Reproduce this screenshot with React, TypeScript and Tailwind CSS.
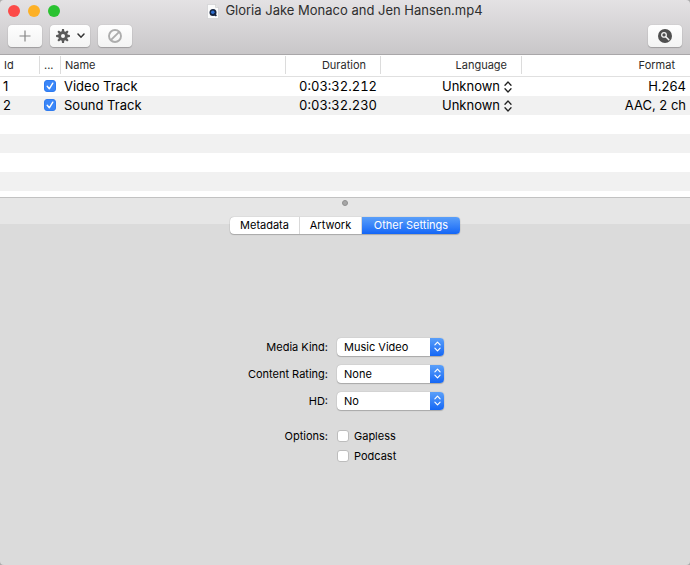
import { useState } from "react";

type Track = {
  id: number;
  name: string;
  duration: string;
  format: string;
};

const tracks: Track[] = [
  { id: 1, name: "Video Track", duration: "0:03:32.212", format: "H.264" },
  { id: 2, name: "Sound Track", duration: "0:03:32.230", format: "AAC, 2 ch" },
];

const tabs = [
  { label: "Metadata", width: "w-[70px]" },
  { label: "Artwork", width: "w-[62px]" },
  { label: "Other Settings", width: "w-[98px]" },
];

const settings = [
  { id: "media-kind", label: "Media Kind:", options: ["Music Video", "Movie", "TV Show"] },
  { id: "content-rating", label: "Content Rating:", options: ["None", "Clean", "Explicit"] },
  { id: "hd", label: "HD:", options: ["No", "720p", "1080p"] },
];

const toolButton =
  "flex h-[22px] items-center justify-center rounded-[4px] bg-linear-to-b from-[#fefefe] to-[#f3f3f3] shadow-[0_0_1px_rgba(0,0,0,0.3),0_1px_1px_rgba(0,0,0,0.2)]";

function UpDown({ className }: { className: string }) {
  return (
    <svg viewBox="0 0 8 12" fill="none" stroke="currentColor" strokeWidth="1.3" strokeLinecap="round" strokeLinejoin="round" className={className}>
      <path d="M1 4.2 4 1l3 3.2M1 7.8 4 11l3-3.2" />
    </svg>
  );
}

function GearIcon() {
  const teeth = [0, 45, 90, 135, 180, 225, 270, 315];
  return (
    <svg viewBox="0 0 14 14" className="size-[14px] text-[#5a5a5a]">
      {teeth.map((angle) => (
        <path key={angle} d="M6 .1h2l.4 3H5.6z" fill="currentColor" transform={`rotate(${angle} 7 7)`} />
      ))}
      <circle cx="7" cy="7" r="3.4" fill="none" stroke="currentColor" strokeWidth="2.8" />
    </svg>
  );
}

function FileIcon() {
  return (
    <svg viewBox="0 0 12 15" className="h-[15px] w-3">
      <path d="M.5.5h8l3 3v11H.5z" fill="#fbfbfb" stroke="#c9c9cc" strokeWidth=".6" />
      <path d="M8.5.5v3h3" fill="#e6e6e6" stroke="#c4c4c4" strokeWidth=".5" />
      <circle cx="6" cy="8.6" r="3.5" fill="#14233f" />
      <circle cx="5.8" cy="8.2" r="1.8" fill="#2f6fd0" />
      <path d="m7 9.8 2.4 2" stroke="#14233f" strokeWidth="1.6" />
    </svg>
  );
}

function HeaderCell({ label, className }: { label: string; className: string }) {
  return (
    <th scope="col" className="p-0 font-normal">
      <div className={`flex h-[18px] items-center ${className}`}>{label}</div>
    </th>
  );
}

function Toolbar() {
  return (
    <header className="border-b border-[#a9a7a9] bg-linear-to-b from-[#e4e2e4] to-[#c9c7c9]">
      <div className="grid h-[22px] grid-cols-[1fr_auto_1fr] items-center px-2">
        <div className="flex gap-2">
          <button aria-label="Close" className="size-3 rounded-full bg-[#fc4a48]" />
          <button aria-label="Minimize" className="size-3 rounded-full bg-[#fdb025]" />
          <button aria-label="Zoom" className="size-3 rounded-full bg-[#2ac231]" />
        </div>
        <h1 className="flex items-center gap-1.5 text-[13px] text-[#2e2e2e]">
          <FileIcon />
          Gloria Jake Monaco and Jen Hansen.mp4
        </h1>
      </div>
      <div className="flex gap-2 px-2 pt-[3px] pb-[7px]">
        <button aria-label="Add" className={`${toolButton} w-[34px]`}>
          <svg viewBox="0 0 12 12" className="size-3">
            <path d="M6 .5v11M.5 6h11" stroke="#858585" strokeWidth="1.2" />
          </svg>
        </button>
        <button aria-label="Actions" className={`${toolButton} w-10 gap-[7px]`}>
          <GearIcon />
          <svg viewBox="0 0 8 6" className="h-1.5 w-2">
            <path d="m1 1 3 3.2L7 1" fill="none" stroke="#333" strokeWidth="1.5" strokeLinecap="round" />
          </svg>
        </button>
        <button aria-label="Remove" className={`${toolButton} w-[34px]`}>
          <svg viewBox="0 0 14 14" className="size-[14px]">
            <path d="M2.8 11.2 11.2 2.8" stroke="#adadad" strokeWidth="1.9" />
            <circle cx="7" cy="7" r="6" fill="none" stroke="#adadad" strokeWidth="1.9" />
          </svg>
        </button>
        <button aria-label="Search" className={`${toolButton} ml-auto w-[34px]`}>
          <svg viewBox="0 0 14 14" className="size-[14px]">
            <circle cx="7" cy="7" r="7" fill="#4f4f4f" />
            <circle cx="6" cy="5.9" r="2.3" fill="none" stroke="#f5f5f5" strokeWidth="1.3" />
            <path d="m7.8 7.7 3 3" stroke="#f5f5f5" strokeWidth="1.5" strokeLinecap="round" />
          </svg>
        </button>
      </div>
    </header>
  );
}

function TrackTable() {
  return (
    <section className="border-b border-[#c2c2c2] bg-white">
      <table className="w-full table-fixed border-collapse text-[13px] text-black">
        <colgroup>
          <col className="w-10" />
          <col className="w-[21px]" />
          <col />
          <col className="w-[95px]" />
          <col className="w-[141px]" />
          <col className="w-[168px]" />
        </colgroup>
        <thead className="text-[11px] text-[#2b2b2b]">
          <tr className="h-[21px] border-b border-[#e0e0e0] text-left">
            <HeaderCell label="Id" className="border-r border-[#dcdcdc] pl-1" />
            <HeaderCell label="..." className="border-r border-[#dcdcdc] pl-1" />
            <HeaderCell label="Name" className="border-r border-[#dcdcdc] pl-1" />
            <HeaderCell label="Duration" className="justify-end border-r border-[#dcdcdc] pr-3.5" />
            <HeaderCell label="Language" className="justify-end border-r border-[#dcdcdc] pr-3.5" />
            <HeaderCell label="Format" className="justify-end pr-[15px]" />
          </tr>
        </thead>
        <tbody>
          {tracks.map((t) => (
            <tr key={t.id} className="h-[19px] leading-[19px] even:bg-[#f1f1f1]">
              <td className="p-0 pl-[3px]">{t.id}</td>
              <td className="p-0 pl-1">
                <div className="relative size-3">
                  <input
                    type="checkbox"
                    defaultChecked
                    aria-label={`Include ${t.name}`}
                    className="peer block size-3 appearance-none rounded-[3px] border border-[#b9b9b9] bg-white checked:border-[#2f7bf0] checked:bg-[#3a86f8]"
                  />
                  <svg viewBox="0 0 12 12" className="pointer-events-none absolute inset-0 hidden size-3 peer-checked:block">
                    <path d="m3.2 6.2 2.1 2.6 3.5-5.6" fill="none" stroke="#fff" strokeWidth="1.4" strokeLinecap="round" strokeLinejoin="round" />
                  </svg>
                </div>
              </td>
              <td className="p-0 pl-[3px]">{t.name}</td>
              <td className="p-0 pr-1 text-right tabular-nums">{t.duration}</td>
              <td className="p-0 pr-2.5">
                <div className="relative ml-auto w-[70px]">
                  <select aria-label={`Language of ${t.name}`} className="block h-[19px] w-full appearance-none bg-transparent leading-[19px]">
                    <option>Unknown</option>
                    <option>English</option>
                  </select>
                  <UpDown className="pointer-events-none absolute top-1 right-0 h-3 w-2 text-[#222]" />
                </div>
              </td>
              <td className="p-0 pr-1 text-right">{t.format}</td>
            </tr>
          ))}
        </tbody>
      </table>
      {/* Empty striped rows below the tracks */}
      <div className="h-[82px] bg-[repeating-linear-gradient(#fff_0_19px,#f1f1f1_19px_38px)]" />
    </section>
  );
}

function SettingsForm() {
  return (
    <form className="grid grid-cols-[82px_107px] items-center gap-x-[9px] text-[11px] leading-[18px] text-black">
      {settings.map((s) => (
        <div key={s.id} className="col-span-2 mb-[9px] grid grid-cols-subgrid">
          <label htmlFor={s.id} className="text-right whitespace-nowrap">
            {s.label}
          </label>
          <div className="relative">
            <select
              id={s.id}
              className="block h-[18px] w-full appearance-none rounded-[4px] bg-white pl-[7px] shadow-[0_0_1px_rgba(0,0,0,0.35),0_1px_1px_rgba(0,0,0,0.2)]"
            >
              {s.options.map((o) => (
                <option key={o}>{o}</option>
              ))}
            </select>
            <span className="pointer-events-none absolute inset-y-0 right-0 flex w-3.5 items-center justify-center rounded-r-[4px] bg-linear-to-b from-[#5a9ff9] to-[#1366f5] text-white">
              <UpDown className="h-[11px] w-[7px]" />
            </span>
          </div>
        </div>
      ))}
      <div role="group" aria-labelledby="options-label" className="col-span-2 mt-2 grid grid-cols-subgrid">
        <span id="options-label" className="text-right">
          Options:
        </span>
        <div className="flex flex-col gap-0.5">
          {["Gapless", "Podcast"].map((option) => (
            <label key={option} className="flex items-center gap-[5px]">
              <input
                type="checkbox"
                className="size-3 appearance-none rounded-[3px] border border-[#bdbdbd] bg-white checked:bg-[#3a86f8]"
              />
              {option}
            </label>
          ))}
        </div>
      </div>
    </form>
  );
}

export default function App() {
  const [active, setActive] = useState("Other Settings");

  return (
    <div className="min-h-screen bg-[#ababab] font-[Inter,'Liberation_Sans',sans-serif]">
      <div className="flex min-h-screen flex-col overflow-hidden rounded-[4px]">
        <Toolbar />
        <TrackTable />
        <main className="flex flex-1 flex-col items-center bg-[linear-gradient(#e6e6e6_26px,#dbdbdb_26px)]">
          <div className="mt-0.5 size-1.5 rounded-full border border-[#8f8f8f] bg-[#a6a6a6]" />
          <div
            role="tablist"
            className="mt-[11px] flex overflow-hidden rounded-[4px] bg-white text-[11px] shadow-[0_0_1px_rgba(0,0,0,0.4),0_1px_1px_rgba(0,0,0,0.2)]"
          >
            {tabs.map((tab) => (
              <button
                key={tab.label}
                role="tab"
                aria-selected={active === tab.label}
                onClick={() => setActive(tab.label)}
                className={`h-[17px] border-r border-[#d9d9d9] leading-[17px] whitespace-nowrap last:border-r-0 aria-selected:bg-linear-to-b aria-selected:from-[#5a9ff9] aria-selected:to-[#1265f6] aria-selected:text-white ${tab.width}`}
              >
                {tab.label}
              </button>
            ))}
          </div>
          <div className="flex flex-1 items-center pt-1">
            <SettingsForm />
          </div>
        </main>
      </div>
    </div>
  );
}
